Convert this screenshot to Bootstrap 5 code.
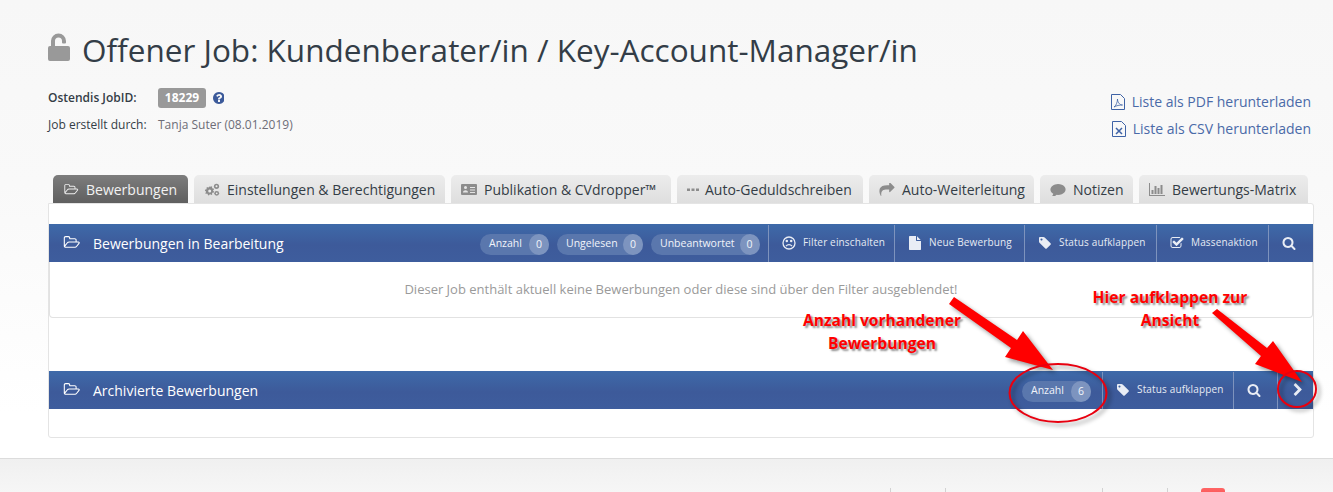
<!DOCTYPE html>
<html lang="de">
<head>
<meta charset="utf-8">
<title>Offener Job</title>
<link rel="stylesheet" href="https://cdn.jsdelivr.net/npm/bootstrap@5.3.0/dist/css/bootstrap.min.css">
<style>
html,body{height:492px;overflow:hidden;background:#fff}
body{font-family:"Open Sans",sans-serif;color:#343d46;font-size:14px}
.pagewrap{position:relative;height:492px;overflow:hidden}
.topzone{height:458px;padding:32px 20px 0 48px;background:linear-gradient(#f7f7f7,#f9f9f9 40%,#fff 90%)}
.titleline{gap:12px;height:36px;margin-bottom:16px}
.titleline h1{font-size:31.500px;font-weight:400;margin:0;line-height:36px;color:#333d47;white-space:nowrap}
.titleline svg{width:22px;height:29px;fill:#999;margin-top:-5px}
.metablock{height:91px;width:1263px}
.metaline{font-size:12px;height:27px;color:#343d46}
.metalabel{width:110px}
.metavalue{color:#6d6d77}
.idchip{background:#999;color:#fff;font-weight:700;font-size:12px;border-radius:3px;height:20px;line-height:20px;width:48px;text-align:center}
.helpicon{width:12px;height:12px;fill:#3c5a9a;margin-left:6px}
.dlcol{padding-top:4px}
.dllink{color:#4a6aa8;text-decoration:none;font-size:14px;height:27px;gap:7px;white-space:nowrap}
.dllink svg{width:14px;height:16px}
.tabrow{gap:6px;padding-left:5px;height:28px}
.tabitem{height:28px;border-radius:5px 5px 0 0;background:linear-gradient(#ececec,#dedede);color:#343d46;font-size:14px;padding-left:10px;gap:7px;white-space:nowrap;text-decoration:none}
.tabitem svg{fill:#8c8c8c;height:13px;width:16px}
.tabitem.ison{background:linear-gradient(#7d7d7d,#5f5f5f);color:#f2f2f2}
.tabitem.ison svg{fill:#eee}
.tw1{width:135px}.tw2{width:251px}.tw3{width:220px}.tw4{width:186px}.tw5{width:165px}.tw6{width:93px}.tw7{width:169px}
.outerbox{height:235px;border:1px solid #e4e4e4;border-radius:0 3px 3px 3px;background:#fff;padding-top:20px;width:1266px}
.barhead{height:38px;background:linear-gradient(#3e6aa9,#3d5a9a 55%,#3e5d9d);color:#fff;display:flex;align-items:stretch}
.bartitle{flex:1 1 auto;font-size:14px;padding-left:13px;gap:12px;white-space:nowrap}
.bartitle svg{width:19px;height:15px;fill:#fff;margin-top:-2px}
.pillset{gap:8px;padding-right:10px}
.pillset.lone{padding-right:11px}
.countpill{height:21px;border-radius:11px;background:#5a77ad;font-size:10.500px;color:#f1f4fa;padding-left:9px;gap:5px;margin-top:2px;white-space:nowrap}
.countnum{flex:0 0 20px;height:21px;width:20px;border-radius:50%;background:#7d94bf;text-align:center;line-height:21px;margin-left:auto}
.barcell{border-left:1px solid #7e93bd;margin-top:1px;padding-left:13px;padding-bottom:2px;gap:7px;font-size:10px;letter-spacing:.15px;color:#e6ebf4;white-space:nowrap}
.barcell svg{fill:#e9edf5;width:14px;height:14px}
.barcell svg.frownicon{fill:none}
.c-filter{width:126px}.c-neu{width:130px}.c-status{width:132px}.c-mass{width:112px}.c-such{width:45px}
.c-status2{width:131px}.c-such2{width:44px}.c-open{width:36px}
.emptybox{height:56px;border:1px solid #e2e2e2;border-top:0;border-radius:0 0 4px 4px;color:#9a9a9a;font-size:13px;margin-bottom:53px}
.footzone{height:34px;border-top:1px solid #dcdcdc;background:linear-gradient(#f0f0f0,#f6f6f6);padding:29px 0 0 890px;display:flex;align-items:flex-start}
.footcell{height:20px;border-left:1px solid #d2d2d2}
.redbox{width:24px;height:20px;background:linear-gradient(#f66,#e33);border-radius:3px 3px 0 0;margin-left:33px}
.marknote{position:absolute;color:#f00;font-weight:700;font-size:15.600px;line-height:23px;text-align:center;white-space:nowrap;text-shadow:2px 2px 2px rgba(0,0,0,.45)}
.marksvg{position:absolute;left:0;top:0;width:1333px;height:492px;pointer-events:none;filter:drop-shadow(3px 3px 2px rgba(0,0,0,.4))}
</style>
</head>
<body>
<svg width="0" height="0" class="d-none">
<defs>
<symbol id="i-folder" viewBox="0 0 1972 1792"><path d="M1845 931q0-35-53-35h-1088q-40 0-85.500 21.500t-71.500 52.500l-294 363q-18 24-18 40 0 35 53 35h1088q40 0 86-22t71-53l294-363q18-22 18-39zm-1141-163h768v-160q0-40-28-68t-68-28h-576q-40 0-68-28t-28-68v-64q0-40-28-68t-68-28h-320q-40 0-68 28t-28 68v853l256-315q44-53 116-87.500t140-34.500zm1269 163q0 62-46 120l-295 363q-43 53-116 87.500t-140 34.500h-1088q-92 0-158-66t-66-158v-960q0-92 66-158t158-66h320q92 0 158 66t66 158v32h544q92 0 158 66t66 158v160h192q54 0 99 24.500t67 70.500q15 32 15 68z"/></symbol>
<symbol id="i-search" viewBox="0 0 1792 1792"><path d="M1216 832q0-185-131.500-316.500t-316.500-131.500-316.500 131.500-131.500 316.500 131.500 316.500 316.500 131.500 316.500-131.500 131.500-316.500zm512 832q0 52-38 90t-90 38q-54 0-90-38l-343-342q-179 124-399 124-143 0-273.500-55.500t-225-150-150-225-55.500-273.500 55.500-273.500 150-225 225-150 273.500-55.500 273.500 55.500 225 150 150 225 55.500 273.500q0 220-124 399l343 343q37 37 37 90z"/></symbol>
<symbol id="i-tag" viewBox="0 0 1792 1792"><path d="M576 448q0-53-37.500-90.500t-90.500-37.500-90.500 37.500-37.500 90.500 37.500 90.500 90.500 37.500 90.500-37.500 37.500-90.500zm1067 576q0 53-37 90l-491 492q-39 37-91 37-53 0-90-37l-715-716q-38-37-64.500-101t-26.500-117v-416q0-52 38-90t90-38h416q53 0 117 26.500t102 64.500l715 714q37 39 37 91z"/></symbol>
</defs>
</svg>
<div class="pagewrap">
  <div class="topzone">
    <div class="titleline d-flex align-items-center">
      <svg viewBox="0 0 22 29"><path d="M2 13h1V8a7.500 7.500 0 0 1 15 0v1.500a1 1 0 0 1-1 1h-2a1 1 0 0 1-1-1V8a3.500 3.500 0 0 0-7 0v5h13a2 2 0 0 1 2 2v11a2 2 0 0 1-2 2H2a2 2 0 0 1-2-2V15a2 2 0 0 1 2-2z"/></svg>
      <h1>Offener Job: Kundenberater/in / Key-Account-Manager/in</h1>
    </div>
    <div class="metablock d-flex justify-content-between">
      <div>
        <div class="metaline d-flex align-items-center">
          <span class="metalabel fw-semibold">Ostendis JobID:</span>
          <span class="idchip">18229</span>
          <svg class="helpicon" viewBox="0 0 1536 1536"><path transform="translate(0,-128)" d="M1024 1376v-192q0-14-9-23t-23-9h-192q-14 0-23 9t-9 23v192q0 14 9 23t23 9h192q14 0 23-9t9-23zm256-672q0-88-55.500-163t-138.500-116-170-41q-243 0-371 213-15 24 8 42l132 100q7 6 19 6 16 0 25-12 53-68 86-92 34-24 86-24 48 0 85.500 26t37.500 59q0 38-20 61t-68 45q-63 28-115.500 86.500t-52.500 125.500v36q0 14 9 23t23 9h192q14 0 23-9t9-23q0-19 21.500-49.500t54.500-49.500q32-18 49-28.500t46-35 44.500-48 28-60.500 12.500-81zm384 192q0 209-103 385.500t-279.500 279.500-385.500 103-385.500-103-279.500-279.500-103-385.500 103-385.500 279.500-279.500 385.500-103 385.500 103 279.500 279.500 103 385.500z"/></svg>
        </div>
        <div class="metaline d-flex align-items-center">
          <span class="metalabel">Job erstellt durch:</span>
          <span class="metavalue">Tanja Suter (08.01.2019)</span>
        </div>
      </div>
      <div class="dlcol d-flex flex-column align-items-end">
        <a class="dllink d-flex align-items-center" href="#"><svg viewBox="0 0 14 16" fill="none" stroke="#3f63a6"><path d="M.5.5h9l4 4v11H.5z"/><path d="M3 13c2-1 3.500-5 3.500-8 0 3 2 6 5 6-3 0-6 .5-8.500 2z" stroke-width=".8"/></svg>Liste als PDF herunterladen</a>
        <a class="dllink d-flex align-items-center" href="#"><svg viewBox="0 0 14 16" fill="none" stroke="#3f63a6"><path d="M.5.500h9l4 4v11H.5z"/><path d="M4 7l6 6M10 7l-6 6" stroke-width="1.500"/></svg>Liste als CSV herunterladen</a>
      </div>
    </div>
    <div class="tabrow d-flex">
      <a class="tabitem tw1 ison d-flex align-items-center" href="#"><svg><use href="#i-folder"/></svg>Bewerbungen</a>
      <a class="tabitem tw2 d-flex align-items-center" href="#"><svg viewBox="0 0 16 13"><path d="M5.500 3.500l1 .3.700-.6 1 .6-.2 1 .7.800 1-.1.400 1.100-.9.500v1l.9.500-.4 1.100-1-.1-.7.800.2 1-1 .6-.7-.7-1 .2-.6.900-1.100-.3v-1l-.9-.5-1 .3-.6-1 .7-.7-.2-1-.9-.5.300-1.100h1l.5-.9-.3-1 1-.6.700.7z"/><circle cx="5.700" cy="8" r="1.500" fill="#ececec"/><circle cx="12.500" cy="3.300" r="2.600"/><circle cx="12.500" cy="3.300" r="1" fill="#ececec"/><circle cx="12.700" cy="10.300" r="2.400"/><circle cx="12.700" cy="10.300" r=".9" fill="#ececec"/></svg>Einstellungen &amp; Berechtigungen</a>
      <a class="tabitem tw3 d-flex align-items-center" href="#"><svg viewBox="0 0 16 13"><path fill-rule="evenodd" d="M1 1h14a1 1 0 0 1 1 1v9a1 1 0 0 1-1 1H1a1 1 0 0 1-1-1V2a1 1 0 0 1 1-1zM3 4.500a1.500 1.500 0 1 0 3 0 1.500 1.500 0 0 0-3 0zM2 9.500h5c0-3-5-3-5 0zM9 4h5v1H9zM9 6.500h5v1H9zM9 9h5v1H9z"/></svg>Publikation &amp; CVdropper™</a>
      <a class="tabitem tw4 d-flex align-items-center" href="#"><svg viewBox="0 0 16 13" style="width:12px;margin-right:-1px"><path d="M0 5h4v3.500H0zM6 5h4v3.500H6zM12 5h4v3.500h-4z"/></svg>Auto-Geduldschreiben</a>
      <a class="tabitem tw5 d-flex align-items-center" href="#"><svg viewBox="0 0 1792 1536"><path transform="translate(0,-128)" d="M1792 640q0 26-19 45l-512 512q-19 19-45 19t-45-19-19-45v-256h-224q-98 0-175.500 6t-154 21.500-133 42.500-105.500 69.500-80 101-48.500 138.500-17.500 181q0 55 5 123 0 6 2.500 23.500t2.500 26.500q0 15-8.500 25t-23.500 10q-16 0-28-17-7-9-13-22t-13.500-30-10.500-24q-127-285-127-451 0-199 53-333 162-403 875-403h224v-256q0-26 19-45t45-19 45 19l512 512q19 19 19 45z"/></svg>Auto-Weiterleitung</a>
      <a class="tabitem tw6 d-flex align-items-center" href="#"><svg viewBox="0 0 1792 1536"><path transform="translate(0,-128)" d="M1792 896q0 174-120 321.500t-326 233-450 85.500q-70 0-145-8-198 175-460 242-49 14-114 22-17 2-30.500-9t-17.500-29v-1q-3-4-.5-12t2-10 4.500-9.500l6-9 7-8.500 8-9q7-8 31-34.500t34.500-38 31-39.500 32.500-51 27-59 26-76q-157-89-247.500-220t-90.500-281q0-130 71-248.500t191-204.500 286-136.500 348-50.500q244 0 450 85.500t326 233 120 321.500z"/></svg>Notizen</a>
      <a class="tabitem tw7 d-flex align-items-center" href="#"><svg viewBox="0 0 16 13"><path d="M0 0h1v12h15v1H0zM2.500 7h2v4h-2zM5.500 3h2v8h-2zM8.500 5h2v6h-2zM11.500 2h2v9h-2z"/></svg>Bewertungs-Matrix</a>
    </div>
    <div class="outerbox">
      <div class="barhead">
        <div class="bartitle d-flex align-items-center"><svg><use href="#i-folder"/></svg>Bewerbungen in Bearbeitung</div>
        <div class="pillset d-flex align-items-center">
          <span class="countpill d-flex align-items-center" style="width:69px">Anzahl<span class="countnum">0</span></span>
          <span class="countpill d-flex align-items-center" style="width:86px">Ungelesen<span class="countnum">0</span></span>
          <span class="countpill d-flex align-items-center" style="width:107px">Unbeantwortet<span class="countnum">0</span></span>
        </div>
        <div class="barcell c-filter d-flex align-items-center"><svg class="frownicon" viewBox="0 0 14 14" stroke="#e9edf5" stroke-width="1.300"><circle cx="7" cy="7" r="6"/><path d="M4 10.200c1.500-2 4.500-2 6 0"/><circle cx="4.800" cy="5" r=".6"/><circle cx="9.200" cy="5" r=".6"/></svg>Filter einschalten</div>
        <div class="barcell c-neu d-flex align-items-center"><svg viewBox="0 0 1536 1792"><path d="M1024 512v-472q22 14 36 28l408 408q14 14 28 36h-472zm-128 32q0 40 28 68t68 28h544v1056q0 40-28 68t-68 28h-1344q-40 0-68-28t-28-68v-1600q0-40 28-68t68-28h800v544z"/></svg>Neue Bewerbung</div>
        <div class="barcell c-status d-flex align-items-center"><svg><use href="#i-tag"/></svg>Status aufklappen</div>
        <div class="barcell c-mass d-flex align-items-center"><svg viewBox="0 0 1792 1792"><path d="M1472 930v318q0 119-84.500 203.500t-203.500 84.500h-832q-119 0-203.500-84.500t-84.500-203.500v-832q0-119 84.500-203.500t203.500-84.500h832q63 0 117 25 15 7 18 23 3 17-9 29l-49 49q-10 10-23 10-3 0-9-2-23-6-45-6h-832q-66 0-113 47t-47 113v832q0 66 47 113t113 47h832q66 0 113-47t47-113v-254q0-13 9-22l64-64q10-10 23-10 6 0 12 3 20 8 20 29zm231-489l-814 814q-24 24-57 24t-57-24l-430-430q-24-24-24-57t24-57l110-110q24-24 57-24t57 24l263 263 647-647q24-24 57-24t57 24l110 110q24 24 24 57t-24 57z"/></svg>Massenaktion</div>
        <div class="barcell c-such d-flex align-items-center"><svg><use href="#i-search"/></svg></div>
      </div>
      <div class="emptybox d-flex align-items-center justify-content-center">Dieser Job enthält aktuell keine Bewerbungen oder diese sind über den Filter ausgeblendet!</div>
      <div class="barhead">
        <div class="bartitle d-flex align-items-center"><svg><use href="#i-folder"/></svg>Archivierte Bewerbungen</div>
        <div class="pillset lone d-flex align-items-center">
          <span class="countpill d-flex align-items-center" style="width:69px">Anzahl<span class="countnum">6</span></span>
        </div>
        <div class="barcell c-status2 d-flex align-items-center"><svg><use href="#i-tag"/></svg>Status aufklappen</div>
        <div class="barcell c-such2 d-flex align-items-center"><svg><use href="#i-search"/></svg></div>
        <div class="barcell c-open d-flex align-items-center"><svg viewBox="0 0 1792 1792"><path d="M1363 877l-742 742q-19 19-45 19t-45-19l-166-166q-19-19-19-45t19-45l531-531-531-531q-19-19-19-45t19-45l166-166q19-19 45-19t45 19l742 742q19 19 19 45t-19 45z"/></svg></div>
      </div>
    </div>
  </div>
  <div class="footzone">
    <div class="footcell" style="width:55px"></div>
    <div class="footcell" style="width:157px"></div>
    <div class="footcell" style="width:65px"></div>
    <div class="footcell" style="width:0"></div>
    <div class="redbox"></div>
  </div>
  <svg class="marksvg" viewBox="0 0 1333 492">
    <path fill="#f00" d="M954 297L1017 340L1023 331L1053 370L1005 357L1011 348L949 304Z"/>
    <path fill="#f00" d="M1217 309L1267 348L1273 341L1302 382L1255 364L1261 356L1212 313Z"/>
    <ellipse cx="1058" cy="393" rx="48.500" ry="29" fill="none" stroke="#e8000f" stroke-width="2"/>
    <ellipse cx="1297" cy="389" rx="19" ry="18" fill="none" stroke="#e8000f" stroke-width="2"/>
  </svg>
  <div class="marknote" style="left:782px;top:309px;width:200px">Anzahl vorhandener<br>Bewerbungen</div>
  <div class="marknote" style="left:1070px;top:286px;width:200px">Hier aufklappen zur<br>Ansicht</div>
</div>
</body>
</html>
